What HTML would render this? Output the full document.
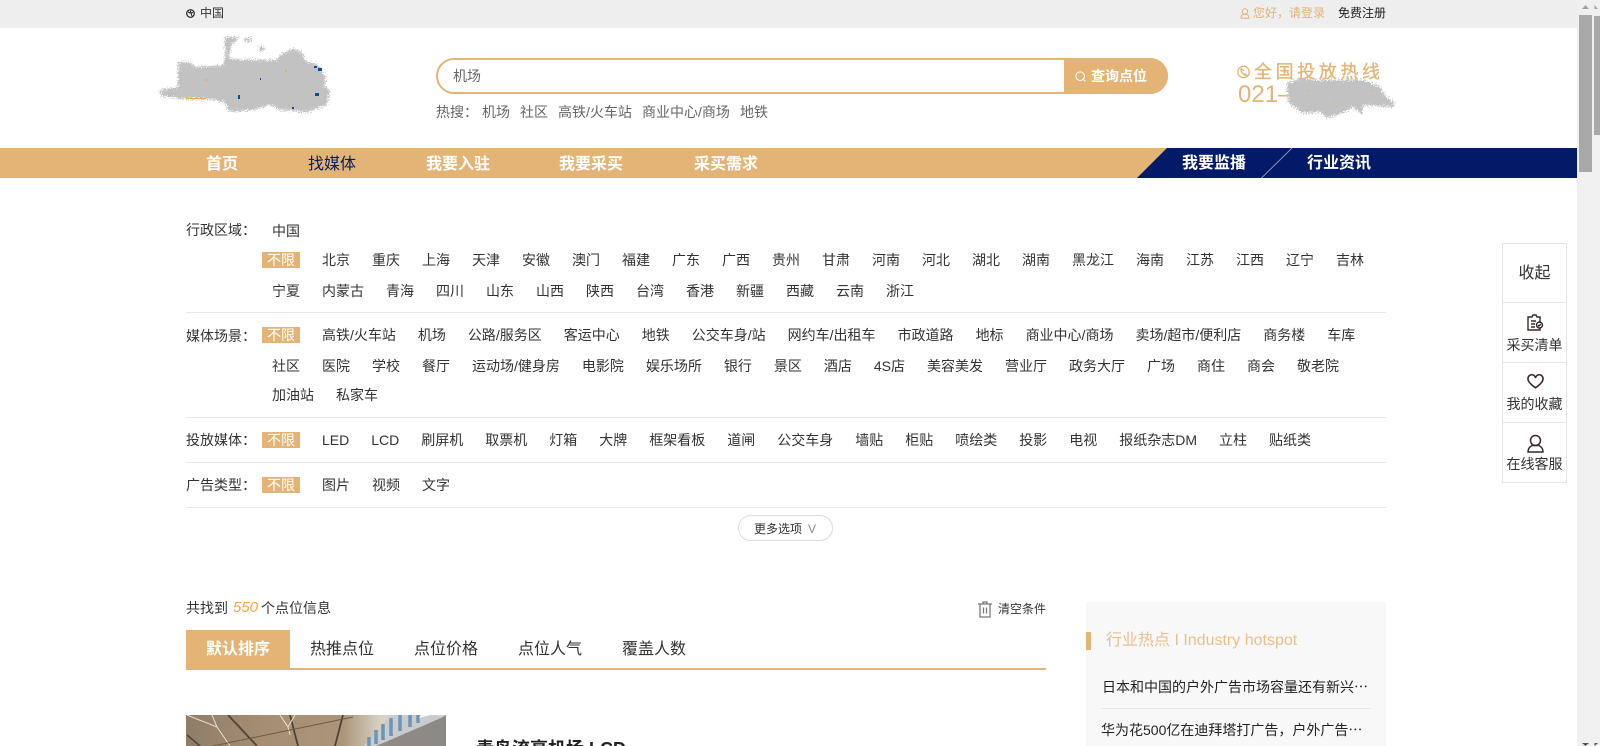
<!DOCTYPE html>
<html lang="zh"><head><meta charset="utf-8"><title>找媒体</title>
<style>
*{box-sizing:border-box}
html,body{margin:0;padding:0;width:1600px;height:746px;overflow:hidden;background:#fff}
body{position:relative;font-family:"Liberation Sans","Noto Sans CJK SC",sans-serif;font-size:14px;color:#333}
.a{position:absolute;white-space:nowrap}
.c{transform:translateY(-50%);line-height:20px}
.row{position:absolute;left:262px;height:30px;display:flex;align-items:center;white-space:nowrap;color:#333}
.row span{padding:0 10px;margin-right:2px}
.row b{font-weight:normal;background:#e3b475;color:#fff;width:38px;height:16px;line-height:16px;text-align:center;margin-right:12px;letter-spacing:0}
.hr{position:absolute;left:186px;width:1200px;height:1px;background:#e8e8e8}
.nav{font-size:16px;font-weight:bold;color:#fff}
.side{position:absolute;left:1502px;width:65px;border:1px solid #e4e4e4;background:#fff}
.side div{position:absolute;left:0;right:0;text-align:center;white-space:nowrap;line-height:18px;font-size:14px;color:#333}
</style></head><body>
<svg width="0" height="0" style="position:absolute"><filter id="n" x="-10%" y="-10%" width="120%" height="120%"><feTurbulence type="fractalNoise" baseFrequency=".8" numOctaves="2" seed="4"/><feDisplacementMap in="SourceGraphic" scale="10" xChannelSelector="R" yChannelSelector="G"/></filter></svg>

<div class="a" style="left:0;top:0;width:1577px;height:28px;background:#eee"></div>
<svg class="a" style="left:186px;top:9px" width="9" height="9" viewBox="0 0 9 9"><circle cx="4.500" cy="4.500" r="3.800" fill="none" stroke="#222" stroke-width="1.200"/><path d="M2 3l3 1 1 3M5 1.500L4 4 7 3.500" stroke="#222" fill="none"/></svg>
<div class="a c" style="left:200px;top:13px;font-size:12px">中国</div>
<svg class="a" style="left:1240px;top:8px" width="10" height="11" viewBox="0 0 10 11" fill="none" stroke="#e3b475"><circle cx="5" cy="3.500" r="2.700"/><path d="M1 10.200c0-2 1-3.400 2.500-3.800h3c1.500.4 2.500 1.800 2.500 3.800z"/></svg>
<div class="a c" style="left:1253px;top:13px;font-size:12px;color:#e3b475">您好，请登录</div>
<div class="a c" style="left:1338px;top:13px;font-size:12px;color:#222">免费注册</div>

<svg class="a" style="left:140px;top:28px" width="210" height="90" viewBox="140 28 210 90"><g fill="#c2c2c2" filter="url(#n)"><path d="M160 118l18-3V90h12l5 5 28-2 2-8 15 3h37l3-5 13-7 10 5 2 8 12 3 8 12v10l5 4-3 15-20 7-27-2-10-5-17 5-23 2-6-10-17-3h-23l-23-3z" transform="translate(0 -28)"/><path d="M225 37h15l-9 8-2 12-4 4zM245 38h6v4h-6zM259 46h5v5h-5z"/></g><g fill="#0b4f94"><rect x="318" y="68" width="4" height="3"/><rect x="314" y="66" width="3" height="2"/><rect x="315" y="93" width="4" height="3"/><rect x="238" y="95" width="2" height="4"/><rect x="292" y="107" width="2" height="2"/><rect x="260" y="78" width="1" height="2"/></g><g fill="#f0ac4a"><rect x="205" y="79" width="2" height="2"/><rect x="186" y="98" width="20" height="1"/><rect x="285" y="70" width="2" height="2"/></g></svg>

<div class="a" style="left:436px;top:58px;width:732px;height:36px;border:2px solid #e3b475;border-radius:18px;background:#fff"></div>
<div class="a" style="left:1064px;top:58px;width:104px;height:36px;background:#e3b475;border-radius:0 18px 18px 0"></div>
<div class="a c" style="left:453px;top:76px;color:#666">机场</div>
<svg class="a" style="left:1075px;top:71px" width="11" height="11" viewBox="0 0 11 11" fill="none" stroke="#fff"><circle cx="5.200" cy="5.200" r="4.300"/><path d="M8.300 8.300l2 2"/></svg>
<div class="a c" style="left:1091px;top:76px;font-weight:bold;color:#fff">查询点位</div>
<div class="a c" style="left:436px;top:112px;color:#666">热搜：</div>
<div class="a c" style="left:482px;top:112px;color:#666">机场</div>
<div class="a c" style="left:520px;top:112px;color:#666">社区</div>
<div class="a c" style="left:558px;top:112px;color:#666">高铁/火车站</div>
<div class="a c" style="left:642px;top:112px;color:#666">商业中心/商场</div>
<div class="a c" style="left:740px;top:112px;color:#666">地铁</div>

<svg class="a" style="left:1237px;top:65px" width="13" height="14" viewBox="0 0 12 13" fill="none" stroke="#e3b475" stroke-width="1.200"><circle cx="6" cy="6.500" r="5.300"/><path d="M3.500 3.500c0 3 2.500 6 6 6.500M4 3l2.500 2.500M7 8l2 1.500"/></svg>
<div class="a c" style="left:1254px;top:72px;font-size:18px;letter-spacing:3.600px;color:#e3b475;-webkit-text-stroke:.3px #e3b475">全国投放热线</div>
<div class="a c" style="left:1238px;top:95px;font-size:24px;color:#e3b475;line-height:28px">021–</div>
<svg class="a" style="left:1280px;top:70px" width="130" height="60" viewBox="1280 70 130 60"><g fill="#c2c2c2" filter="url(#n)"><path d="M1287 83L1302 78 1317 80 1340 80 1363 80 1380 87 1387 98 1395 103 1393 107 1363 105 1362 115 1353 107 1343 113 1327 118 1320 112 1302 113 1288 102z"/></g><g fill="#e3b475"><rect x="1308" y="90" width="2" height="2"/><rect x="1335" y="100" width="2" height="2"/><rect x="1372" y="90" width="2" height="2"/><rect x="1352" y="102" width="2" height="1"/></g></svg>

<div class="a" style="left:0;top:148px;width:1577px;height:30px;background:#e3b475"></div>
<svg class="a" style="left:1137px;top:148px" width="440" height="30"><path d="M30 0H440V30H0z" fill="#031a68"/><path d="M124.500 30L155 0" stroke="#8d93b4" stroke-width="1"/></svg>
<div class="a c nav" style="left:206px;top:165px">首页</div>
<div class="a c nav" style="left:308px;top:165px;color:#031a68;font-weight:normal">找媒体</div>
<div class="a c nav" style="left:426px;top:165px">我要入驻</div>
<div class="a c nav" style="left:559px;top:165px">我要采买</div>
<div class="a c nav" style="left:694px;top:165px">采买需求</div>
<div class="a c nav" style="left:1182px;top:164px">我要监播</div>
<div class="a c nav" style="left:1307px;top:164px">行业资讯</div>

<div class="a c" style="left:186px;top:230px">行政区域：</div>
<div class="row" style="top:216px"><span>中国</span></div>
<div class="row" style="top:245px"><b>不限</b><span>北京</span><span>重庆</span><span>上海</span><span>天津</span><span>安徽</span><span>澳门</span><span>福建</span><span>广东</span><span>广西</span><span>贵州</span><span>甘肃</span><span>河南</span><span>河北</span><span>湖北</span><span>湖南</span><span>黑龙江</span><span>海南</span><span>江苏</span><span>江西</span><span>辽宁</span><span>吉林</span></div>
<div class="row" style="top:276px"><span>宁夏</span><span>内蒙古</span><span>青海</span><span>四川</span><span>山东</span><span>山西</span><span>陕西</span><span>台湾</span><span>香港</span><span>新疆</span><span>西藏</span><span>云南</span><span>浙江</span></div>
<div class="hr" style="top:312px"></div>

<div class="a c" style="left:186px;top:336px">媒体场景：</div>
<div class="row" style="top:320px"><b>不限</b><span>高铁/火车站</span><span>机场</span><span>公路/服务区</span><span>客运中心</span><span>地铁</span><span>公交车身/站</span><span>网约车/出租车</span><span>市政道路</span><span>地标</span><span>商业中心/商场</span><span>卖场/超市/便利店</span><span>商务楼</span><span>车库</span></div>
<div class="row" style="top:351px"><span>社区</span><span>医院</span><span>学校</span><span>餐厅</span><span>运动场/健身房</span><span>电影院</span><span>娱乐场所</span><span>银行</span><span>景区</span><span>酒店</span><span>4S店</span><span>美容美发</span><span>营业厅</span><span>政务大厅</span><span>广场</span><span>商住</span><span>商会</span><span>敬老院</span></div>
<div class="row" style="top:380px"><span>加油站</span><span>私家车</span></div>
<div class="hr" style="top:417px"></div>

<div class="a c" style="left:186px;top:440px">投放媒体：</div>
<div class="row" style="top:425px"><b>不限</b><span>LED</span><span>LCD</span><span>刷屏机</span><span>取票机</span><span>灯箱</span><span>大牌</span><span>框架看板</span><span>道闸</span><span>公交车身</span><span>墙贴</span><span>柜贴</span><span>喷绘类</span><span>投影</span><span>电视</span><span>报纸杂志DM</span><span>立柱</span><span>贴纸类</span></div>
<div class="hr" style="top:462px"></div>

<div class="a c" style="left:186px;top:485px">广告类型：</div>
<div class="row" style="top:470px"><b>不限</b><span>图片</span><span>视频</span><span>文字</span></div>
<div class="hr" style="top:507px"></div>

<div class="a" style="left:738px;top:515px;width:95px;height:26px;border:1px solid #dcdcdc;border-radius:13px;background:#fff"></div>
<div class="a c" style="left:754px;top:529px;font-size:12px">更多选项</div>
<div class="a c" style="left:808px;top:529px;font-size:12px;color:#8a8a8a">V</div>

<div class="a c" style="left:186px;top:608px">共找到</div>
<div class="a c" style="left:233px;top:608px;font-size:15px;font-style:italic;color:#f0a748">550</div>
<div class="a c" style="left:261px;top:608px">个点位信息</div>
<svg class="a" style="left:978px;top:601px" width="14" height="17" viewBox="0 0 14 17" fill="none" stroke="#777" stroke-width="1.300"><path d="M0 3h14M5 3V1h4v2M2 3v13h10V3M5.500 6.500v6M8.500 6.500v6"/></svg>
<div class="a c" style="left:998px;top:609px;font-size:12px">清空条件</div>

<div class="a" style="left:186px;top:630px;width:860px;height:40px;border-bottom:2px solid #e3b475"></div>
<div class="a" style="left:186px;top:630px;width:104px;height:38px;background:#e3b475"></div>
<div class="a c" style="left:206px;top:650px;font-size:16px;font-weight:bold;color:#fff">默认排序</div>
<div class="a c" style="left:310px;top:650px;font-size:16px">热推点位</div>
<div class="a c" style="left:414px;top:650px;font-size:16px">点位价格</div>
<div class="a c" style="left:518px;top:650px;font-size:16px">点位人气</div>
<div class="a c" style="left:622px;top:650px;font-size:16px">覆盖人数</div>

<svg class="a" style="left:186px;top:715px" width="260" height="31" viewBox="0 0 260 31"><defs><linearGradient id="g" x1="0" x2="1"><stop offset="0" stop-color="#8f7d68"/><stop offset=".3" stop-color="#a68e72"/><stop offset=".6" stop-color="#ab9478"/><stop offset=".75" stop-color="#d8d2c6"/><stop offset="1" stop-color="#d8d2c6"/></linearGradient></defs><rect width="260" height="31" fill="url(#g)"/><path d="M205 0H250L255 3 190 31H178z" fill="#c9ccce"/><path d="M190 31L255 3 260 0V31z" fill="#8d8a86"/><path d="M183 31V22M190 29V15M197 25V9M205 21V3M214 16V0M224 12V0M232 8V0" stroke="#6f94b4" stroke-width="3.500"/><path d="M42 0L71 31M104 0L112 31M157 0L149 31" stroke="#4a443c" stroke-width="1.800" fill="none"/><path d="M1 20L14 31" stroke="#4a443c" stroke-width="1.500"/><path d="M1 0L31 12 44 31M26 0L31 12M94 0L102 12 109 0M102 12L104 20" stroke="#e6e0d4" stroke-width="1" fill="none"/><path d="M27 31L167 2" stroke="#6e5a46" stroke-width="1"/><path d="M235 0h10l-12 3z" fill="#f5f5f3"/></svg>
<div class="a" style="left:476px;top:737px;font-size:18px;font-weight:bold;line-height:24px;color:#222">青岛流亭机场 LCD</div>

<div class="a" style="left:1086px;top:602px;width:300px;height:144px;background:#f8f8f8"></div>
<div class="a" style="left:1086px;top:632px;width:5px;height:18px;background:#e3b475"></div>
<div class="a c" style="left:1106px;top:641px;font-size:16px;color:#e9bf8e">行业热点 I Industry hotspot</div>
<div class="a c" style="left:1102px;top:687px;color:#222">日本和中国的户外广告市场容量还有新兴⋯</div>
<div class="a" style="left:1101px;top:708px;width:270px;height:1px;background:#e8e8e8"></div>
<div class="a c" style="left:1101px;top:730px;color:#222">华为花500亿在迪拜塔打广告，户外广告⋯</div>

<div class="side" style="top:243px;height:240px">
<div style="top:21px;font-size:16px">收起</div>
<div style="top:58px;height:1px;background:#e4e4e4"></div>
<svg class="a" style="left:23px;top:70px" width="18" height="18" viewBox="0 0 18 18" fill="none" stroke="#3a2a25" stroke-width="1.400"><path d="M3 3h3l1-2h3l1 2h3v6M14 14v2H2V3h2M5 7h5M5 10h4M5 13h4"/><circle cx="13.500" cy="11" r="3"/><path d="M12 11l1 1 2-2"/></svg>
<div style="top:92px">采买清单</div>
<div style="top:118px;height:1px;background:#e4e4e4"></div>
<svg class="a" style="left:24px;top:130px" width="17" height="15" viewBox="0 0 17 15" fill="none" stroke="#3a2a25" stroke-width="1.600"><path d="M8.500 13.800C3 10 1 7.500 1 5a3.700 3.700 0 0 1 7.500-1A3.700 3.700 0 0 1 16 5c0 2.500-2 5-7.500 8.800z"/></svg>
<div style="top:151px">我的收藏</div>
<div style="top:178px;height:1px;background:#e4e4e4"></div>
<svg class="a" style="left:24px;top:190px" width="17" height="19" viewBox="0 0 17 19" fill="none" stroke="#3a2a25" stroke-width="1.500"><circle cx="8.500" cy="6.500" r="5"/><path d="M1 18c0-3 1-5 4-6.500h7c3 1.500 4 3.500 4 6.500z"/></svg>
<div style="top:211px">在线客服</div>
</div>

<div class="a" style="left:1577px;top:0;width:23px;height:746px;background:#f0f0f0"></div>
<div class="a" style="left:1579px;top:15px;width:13px;height:157px;background:#a8a8a8"></div>
<div class="a" style="left:1594px;top:16px;width:6px;height:119px;background:#a8a8a8"></div>
<svg class="a" style="left:1577px;top:0" width="23" height="746"><path d="M5 9l3.500-4L12 9zM17.500 9V5L21 9z" fill="#a0a0a0"/><path d="M5 743h7l-3.500 3zM17.500 743H21l-3.500 3z" fill="#505050"/></svg>
</body></html>
